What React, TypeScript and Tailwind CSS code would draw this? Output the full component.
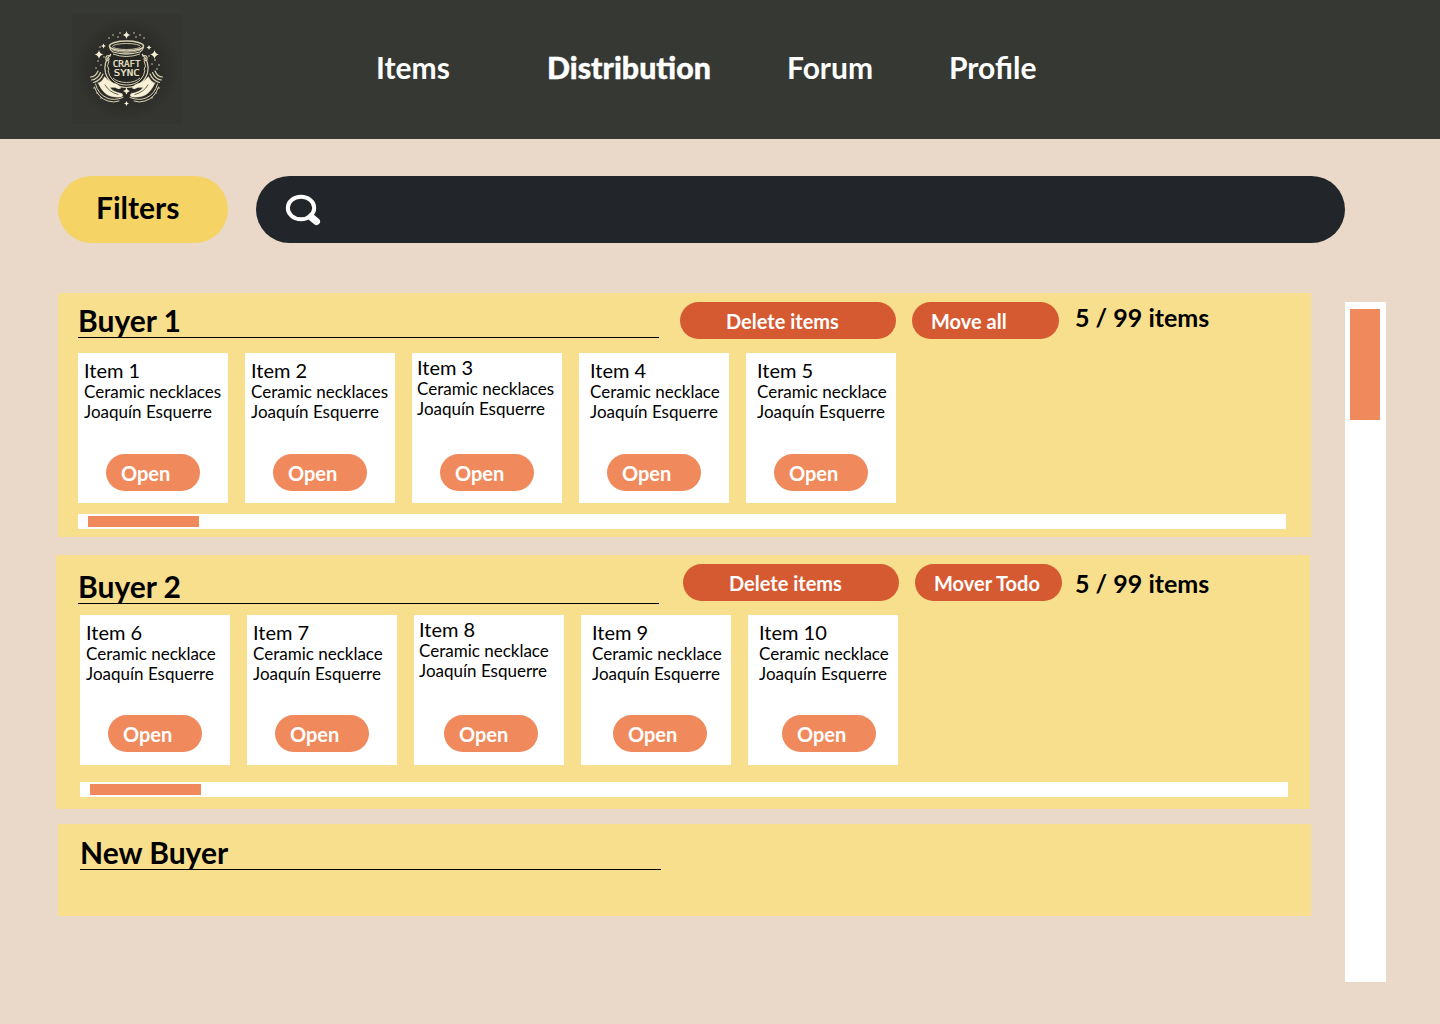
import React from "react";

type Item = { name: string; detail: string; text: string; open: string };
type Buyer = {
  name: string;
  panel: string;
  header: string;
  title: string;
  actions: string;
  moveLabel: string;
  count: string;
  track: string;
  items: Item[];
};

const buyers: Buyer[] = [
  {
    name: "Buyer 1",
    panel: "h-[244px] w-[1253px] ml-[2px] pl-5",
    header: "h-[60px] pt-[9px]",
    title: "h-[36px]",
    actions: "ml-[21px] gap-4",
    moveLabel: "Move all",
    count: "ml-4",
    track: "mt-[11px]",
    items: [
      { name: "Item 1", detail: "Ceramic necklaces", text: "pl-1.5 pt-[5px]", open: "ml-7 mt-[101px]" },
      { name: "Item 2", detail: "Ceramic necklaces", text: "pl-1.5 pt-[5px]", open: "ml-7 mt-[101px]" },
      { name: "Item 3", detail: "Ceramic necklaces", text: "pl-[5px] pt-[2px]", open: "ml-7 mt-[101px]" },
      { name: "Item 4", detail: "Ceramic necklace", text: "pl-[11px] pt-[5px]", open: "ml-7 mt-[101px]" },
      { name: "Item 5", detail: "Ceramic necklace", text: "pl-[11px] pt-[5px]", open: "ml-7 mt-[101px]" },
    ],
  },
  {
    name: "Buyer 2",
    panel: "mt-[18px] h-[254px] w-[1254px] pl-6",
    header: "-ml-0.5 h-[60px] pt-[9px]",
    title: "mt-[4px] h-[36px]",
    actions: "ml-[24px] gap-4",
    moveLabel: "Mover Todo",
    count: "ml-[13px] mt-[4px]",
    track: "mt-[17px]",
    items: [
      { name: "Item 6", detail: "Ceramic necklace", text: "pl-1.5 pt-[5px]", open: "ml-7 mt-[100px]" },
      { name: "Item 7", detail: "Ceramic necklace", text: "pl-1.5 pt-[5px]", open: "ml-7 mt-[100px]" },
      { name: "Item 8", detail: "Ceramic necklace", text: "pl-[5px] pt-[2px]", open: "ml-[30px] mt-[100px]" },
      { name: "Item 9", detail: "Ceramic necklace", text: "pl-[11px] pt-[5px]", open: "ml-8 mt-[100px]" },
      { name: "Item 10", detail: "Ceramic necklace", text: "pl-[11px] pt-[5px]", open: "ml-[34px] mt-[100px]" },
    ],
  },
];

function Star({ x, y, r }: { x: number; y: number; r: number }) {
  return (
    <path
      transform={`translate(${x} ${y}) scale(${r})`}
      d="M0-1Q.15-.15 1 0Q.15.15 0 1Q-.15.15-1 0Q-.15-.15 0-1Z"
      fill="#f6efd6"
    />
  );
}

const dots = [
  [109, 38], [113, 35], [118, 37], [120, 33], [134, 33], [136, 37], [140, 35], [144, 38], [100, 47], [155, 60],
  [98, 61], [101, 65], [96, 68], [159, 65], [152, 64], [157, 69], [94, 88], [97, 93], [101, 98], [159, 88],
  [156, 93], [152, 98], [104, 57], [149, 56],
];

function Hand() {
  return (
    <g fill="none" stroke="#dcd3b4" strokeLinecap="round">
      <path d="M90.500 77Q95.500 77 98 71" strokeWidth="1.200" />
      <path d="M91.500 80Q97.500 79.500 100.500 72.500" strokeWidth="1.200" />
      <path d="M93.500 82.500Q100 81 103 74" strokeWidth="1.200" />
      <path
        d="M98 83Q102 82 104.500 76.500Q108 81 113 83Q118 83.500 121 88Q119 90 115 87.500L110 87.500Q113 92 122 93.500Q124 96 121 97Q112 98 106 94Q101 90 98 83Z"
        fill="#f8f0d5"
        strokeWidth=".3"
      />
      <path d="M95.500 84Q98 94 107 98Q114 101 123 97.500" strokeWidth="1" />
      <path d="M94.500 87Q98 98 108 101Q114 103 119 101" strokeWidth="1" />
      <path d="M105 85Q109 92 118 94.500" stroke="#3b3a30" strokeWidth=".8" />
    </g>
  );
}

function Logo() {
  return (
    <svg className="ml-[72px] mt-[14px] h-[111px] w-[111px] shrink-0" viewBox="72 14 111 111">
      <defs>
        <radialGradient id="logoShade">
          <stop offset="0" stopColor="#20211d" />
          <stop offset=".6" stopColor="#2b2c28" />
          <stop offset="1" stopColor="#343530" />
        </radialGradient>
      </defs>
      <rect x="72" y="14" width="110" height="110" fill="#343530" />
      <circle cx="126.500" cy="69" r="52" fill="url(#logoShade)" />
      <g fill="none" stroke="#d8d0b2">
        <ellipse cx="126.500" cy="46" rx="17" ry="5" strokeWidth="1.600" />
        <ellipse cx="126.500" cy="46.500" rx="14" ry="3" strokeWidth=".9" />
        <path d="M109.500 47Q110 50 113 52Q126 56 140 52Q143 50 143.500 47" strokeWidth="1.300" />
        <path d="M112.500 50Q126 55 140.500 50" strokeWidth=".8" />
        <path d="M111 54Q103 62 105.500 73Q110 87 126.500 87.500Q143 87 147.500 73Q150 62 142 54" strokeWidth="1.200" />
        <path d="M113 54Q126 59 140 54" strokeWidth="1" />
        <path d="M108 70Q109 76 112 79Q117 85 126.500 85Q136 85 141 79Q144 76 145 70" strokeWidth="1" />
        <path d="M113 78Q118 82.500 126.500 82.500Q135 82.500 140 78" strokeWidth=".9" />
        <path d="M111 56Q105 54 106 60Q109 62 109 58M142 56Q148 54 147 60Q144 62 144 58" strokeWidth="1.200" />
        <path d="M109 61Q106 66 109 70M144 61Q147 66 144 70" strokeWidth="1" />
      </g>
      <g fill="#f4edd4" stroke="#f4edd4" strokeWidth=".2" fontFamily="DejaVu Sans Mono" fontSize="9.500" textAnchor="middle">
        <text x="126.700" y="66.500" textLength="28" lengthAdjust="spacingAndGlyphs">CRAFT</text>
        <text x="126.700" y="76.300" textLength="26" lengthAdjust="spacingAndGlyphs">SYNC</text>
      </g>
      <Hand />
      <g transform="translate(253 0) scale(-1 1)">
        <Hand />
      </g>
      <Star x={126.500} y={35} r={4} />
      <Star x={99} y={54.500} r={4.500} />
      <Star x={154.500} y={54.500} r={4.500} />
      <Star x={126.500} y={91} r={3.500} />
      <Star x={126.500} y={103.500} r={2.500} />
      <Star x={103.500} y={46} r={2.500} />
      <Star x={149} y={47.500} r={2.500} />
      {dots.map(([x, y]) => (
        <circle key={`${x}-${y}`} cx={x} cy={y} r=".8" fill="#d8d0b2" />
      ))}
    </svg>
  );
}

function ItemCard({ item }: { item: Item }) {
  return (
    <article className="grid h-[150px] w-[150px] shrink-0 bg-white">
      <div className={`col-start-1 row-start-1 whitespace-nowrap ${item.text}`}>
        <h3 className="text-[20px] leading-6">{item.name}</h3>
        <p className="text-[17px] leading-5">{item.detail}</p>
        <p className="text-[17px] leading-5">Joaquín Esquerre</p>
      </div>
      <button
        className={`col-start-1 row-start-1 h-[37px] w-[94px] rounded-full bg-[#f08a5d] pl-[15px] pt-px text-left text-[20px] font-bold leading-6 text-white ${item.open}`}
      >
        Open
      </button>
    </article>
  );
}

function BuyerPanel({ buyer }: { buyer: Buyer }) {
  return (
    <section className={`bg-[#f8df8d] ${buyer.panel}`}>
      <header className={`flex items-start ${buyer.header}`}>
        <h2 className={`w-[581px] border-b border-black text-[30px] font-bold leading-9 ${buyer.title}`}>
          {buyer.name}
        </h2>
        <div className={`flex ${buyer.actions}`}>
          <button className="h-[37px] w-[216px] rounded-full bg-[#d65a31] pl-[46px] pt-px text-left text-[20px] font-bold leading-6 text-white">
            Delete items
          </button>
          <button className="h-[37px] w-[147px] rounded-full bg-[#d65a31] pl-[19px] pt-px text-left text-[20px] font-bold leading-6 text-white">
            {buyer.moveLabel}
          </button>
        </div>
        <p className={`text-[25px] font-bold leading-[30px] ${buyer.count}`}>5 / 99 items</p>
      </header>
      <div className="flex gap-[17px]">
        {buyer.items.map((item) => (
          <ItemCard key={item.name} item={item} />
        ))}
      </div>
      <div className={`h-[15px] w-[1208px] bg-white pl-2.5 pt-0.5 ${buyer.track}`}>
        <div className="h-[11px] w-[111px] bg-[#f08a5d]" />
      </div>
    </section>
  );
}

export default function App() {
  return (
    <div className="h-[1024px] w-[1440px] overflow-hidden bg-[#ead9c8] font-['Lato',sans-serif] text-black">
      <header className="flex h-[139px] bg-[#363833]">
        <Logo />
        <nav className="ml-[193px] flex pt-[49px] text-[30px] font-bold leading-9 text-white">
          <a className="w-[171px]">Items</a>
          <a className="w-[240px] text-[30.300px] font-black [-webkit-text-stroke:0.400px_white]">Distribution</a>
          <a className="w-[162px]">Forum</a>
          <a>Profile</a>
        </nav>
      </header>
      <div className="ml-[58px] mt-[37px] flex h-[67px] gap-7">
        <button className="w-[170px] rounded-full bg-[#f5d365] pb-[5px] pl-[38px] text-left text-[30px] font-bold leading-9">
          Filters
        </button>
        <div className="w-[1089px] rounded-full bg-[#222529] pl-[29px] pt-[18px]">
          <svg className="h-8 w-9" viewBox="0 0 36 32" fill="none" stroke="#fff">
            <ellipse cx="16" cy="14" rx="13.200" ry="11.200" strokeWidth="4" />
            <path d="M26 23L31.500 27.500" strokeWidth="7" strokeLinecap="round" />
          </svg>
        </div>
      </div>
      <div className="flex">
        <main className="ml-14 mt-[50px] w-[1255px]">
          {buyers.map((buyer) => (
            <BuyerPanel key={buyer.name} buyer={buyer} />
          ))}
          <section className="ml-[2px] mt-[15px] h-[92px] w-[1253px] bg-[#f8df8d] pl-[22px] pt-[10px]">
            <h2 className="h-[36px] w-[581px] border-b border-black text-[30px] font-bold leading-9">New Buyer</h2>
          </section>
        </main>
        <aside className="ml-[34px] mt-[59px] h-[680px] w-[41px] bg-white pl-[5px] pt-[7px]">
          <div className="h-[111px] w-[30px] bg-[#f08a5d]" />
        </aside>
      </div>
    </div>
  );
}
